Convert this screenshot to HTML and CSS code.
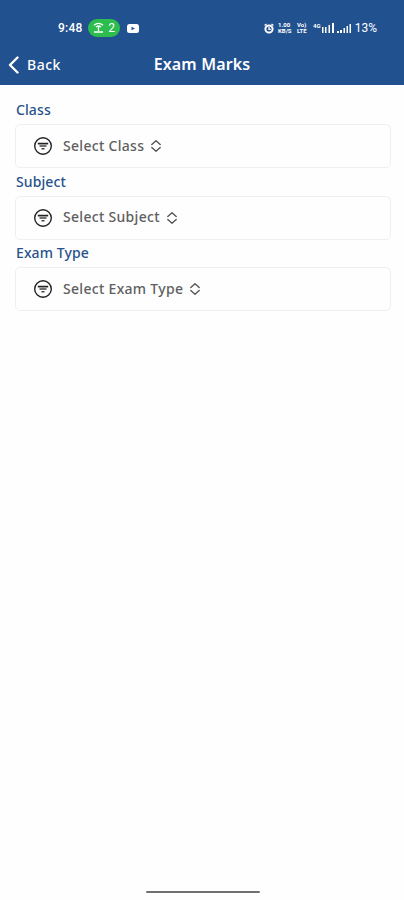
FILE: index.html
```
<!DOCTYPE html>
<html lang="en">
<head>
  <meta charset="UTF-8" />
  <meta name="viewport" content="width=device-width, initial-scale=1" />
  <title>Exam Marks</title>
  <link rel="stylesheet" href="styles.css">
</head>
<body>

  <header class="header">
    <div class="status-bar">
      <span class="time">9:48</span>
      <span class="hotspot">
        <svg width="11" height="12" viewBox="0 0 11 12" fill="none" stroke="currentColor">
          <path d="M1 3.2Q5.5-.6 10 3.2M3 5Q5.5 3 8 5M5.5 5V9M1 10H10" stroke-width="1.3"/>
        </svg>
        <span>2</span>
      </span>
      <svg class="video" width="12" height="9" viewBox="0 0 12 9">
        <rect width="12" height="9" rx="2.5" fill="#fff"/>
        <path d="M4.5 2.8L8 4.5L4.5 6.2Z" fill="#22518f"/>
      </svg>
      <div class="status-right">
        <svg class="alarm" width="10" height="11" viewBox="0 0 10 11" fill="none" stroke="currentColor">
          <circle cx="5" cy="6" r="3.6" stroke-width="2"/>
          <path d="M5 4V6.3H6.8M.6 2.6L2.5 1M9.4 2.6L7.5 1" stroke-width="1.3"/>
        </svg>
        <span class="tiny speed"><span>1.00</span><span>KB/S</span></span>
        <span class="tiny volte"><span>Vo)</span><span>LTE</span></span>
        <span class="network">4G</span>
        <svg class="signal" width="13" height="11" viewBox="0 0 13 11" fill="currentColor">
          <path d="M0 4H1.5V10H0ZM3 4H4.5V10H3ZM6.5 2H8V10H6.5ZM10 0H12V10H10Z"/>
        </svg>
        <svg class="signal-two" width="14" height="11" viewBox="0 0 14 11" fill="currentColor">
          <path d="M0 8H2V10H0ZM3 7H5V10H3ZM6.5 5H8V10H6.5ZM9.5 3H11V10H9.5ZM12.5 1H14V10H12.5Z"/>
        </svg>
        <span class="battery">13%</span>
      </div>
    </div>
    <div class="nav-bar">
      <a class="back">
        <svg width="12" height="18" viewBox="0 0 12 18" fill="none" stroke="currentColor" stroke-width="2.4" stroke-linecap="round" stroke-linejoin="round">
          <path d="M9.5 1.5L2 9L9.5 16.5"/>
        </svg>
        <span>Back</span>
      </a>
      <h1 class="title">Exam Marks</h1>
    </div>
  </header>

  <svg class="sprite" width="0" height="0">
    <symbol id="filter" viewBox="0 0 20 20">
      <circle cx="10" cy="10" r="8.3" fill="none" stroke="#222" stroke-width="1.4"/>
      <path d="M4.8 7.6H15.2" stroke="#222" stroke-width="1.7"/>
      <path d="M6.5 10H13.5M8.5 12.8H11.5" stroke="#444" stroke-width="1.6"/>
    </symbol>
    <symbol id="arrows" viewBox="0 0 12 14">
      <path d="M1.8 5.5L6 1.8L10.2 5.5M1.8 8.5L6 12.2L10.2 8.5" fill="none" stroke="#555" stroke-width="1.4" stroke-linecap="round" stroke-linejoin="round"/>
    </symbol>
  </svg>

  <main class="form">
    <div class="field">
      <label class="label">Class</label>
      <div class="select">
        <svg class="filter"><use href="#filter"/></svg>
        <span class="value">Select Class</span>
        <svg class="arrows"><use href="#arrows"/></svg>
      </div>
    </div>
    <div class="field">
      <label class="label">Subject</label>
      <div class="select">
        <svg class="filter"><use href="#filter"/></svg>
        <span class="value">Select Subject</span>
        <svg class="arrows"><use href="#arrows"/></svg>
      </div>
    </div>
    <div class="field">
      <label class="label">Exam Type</label>
      <div class="select">
        <svg class="filter"><use href="#filter"/></svg>
        <span class="value">Select Exam Type</span>
        <svg class="arrows"><use href="#arrows"/></svg>
      </div>
    </div>
  </main>

  <div class="home-indicator"></div>

</body>
</html>
```
FILE: styles.css
```
* {
  box-sizing: border-box;
}
body {
  margin: 0;
  height: 900px;
  display: flex;
  flex-direction: column;
  background: #fefefe;
  font-family: "Noto Sans", "Open Sans", sans-serif;
  overflow: hidden;
}

.header {
  height: 85px;
  background: #22518f;
  color: #fff;
}
.status-bar {
  height: 46px;
  padding: 10px 27px 0 58px;
  display: flex;
  align-items: center;
  font-family: Roboto, sans-serif;
  font-size: 12px;
}
.time {
  width: 30px;
  font-weight: 500;
  letter-spacing: 0.2px;
}
.hotspot {
  width: 32px;
  height: 18px;
  border-radius: 9px;
  background: #2dbd4e;
  display: flex;
  align-items: center;
  justify-content: center;
  gap: 4px;
}
.video {
  margin-left: 7px;
}
.status-right {
  margin-left: auto;
  width: 113px;
  display: flex;
  align-items: center;
}
.tiny {
  display: flex;
  flex-direction: column;
  font-size: 6px;
  line-height: 6px;
  font-weight: 700;
}
.speed {
  width: 15px;
  margin-left: 4px;
}
.volte {
  width: 12px;
  margin-left: 4px;
}
.network {
  width: 9px;
  margin: -6px 0 0 4px;
  font-size: 6px;
  font-weight: 700;
}
.signal-two {
  margin-left: 2px;
}
.battery {
  margin-left: auto;
}

.nav-bar {
  height: 39px;
  display: grid;
  grid-template-columns: 1fr auto 1fr;
  align-items: start;
}
.back {
  padding: 10px 0 0 8px;
  display: flex;
  align-items: center;
  gap: 7px;
  font-size: 14px;
  line-height: 18px;
  font-weight: 500;
  letter-spacing: 0.5px;
}
.title {
  margin: 0;
  padding-top: 7px;
  font-size: 16px;
  line-height: 22px;
  font-weight: 600;
  letter-spacing: 0.15px;
}

.sprite {
  position: absolute;
}
.form {
  padding: 15px 13px 0 15px;
}
.field {
  height: 71.5px;
}
.label {
  display: block;
  height: 24px;
  padding-left: 1px;
  color: #28528b;
  font-size: 14px;
  line-height: 20px;
  font-weight: 500;
  letter-spacing: 0.1px;
}
.select {
  height: 44px;
  padding-left: 17px;
  display: flex;
  align-items: center;
  border: 1px solid #efefef;
  border-radius: 5px;
}
.filter {
  width: 20px;
  height: 20px;
  margin-right: 10px;
}
.value {
  padding-bottom: 2px;
  color: #606060;
  font-size: 14px;
  font-weight: 500;
  letter-spacing: 0.3px;
}
.arrows {
  width: 12px;
  height: 14px;
  margin-left: 6px;
}

.home-indicator {
  width: 114px;
  height: 2px;
  margin: auto 144px 7px auto;
  border-radius: 1px;
  background: #707070;
}
```
